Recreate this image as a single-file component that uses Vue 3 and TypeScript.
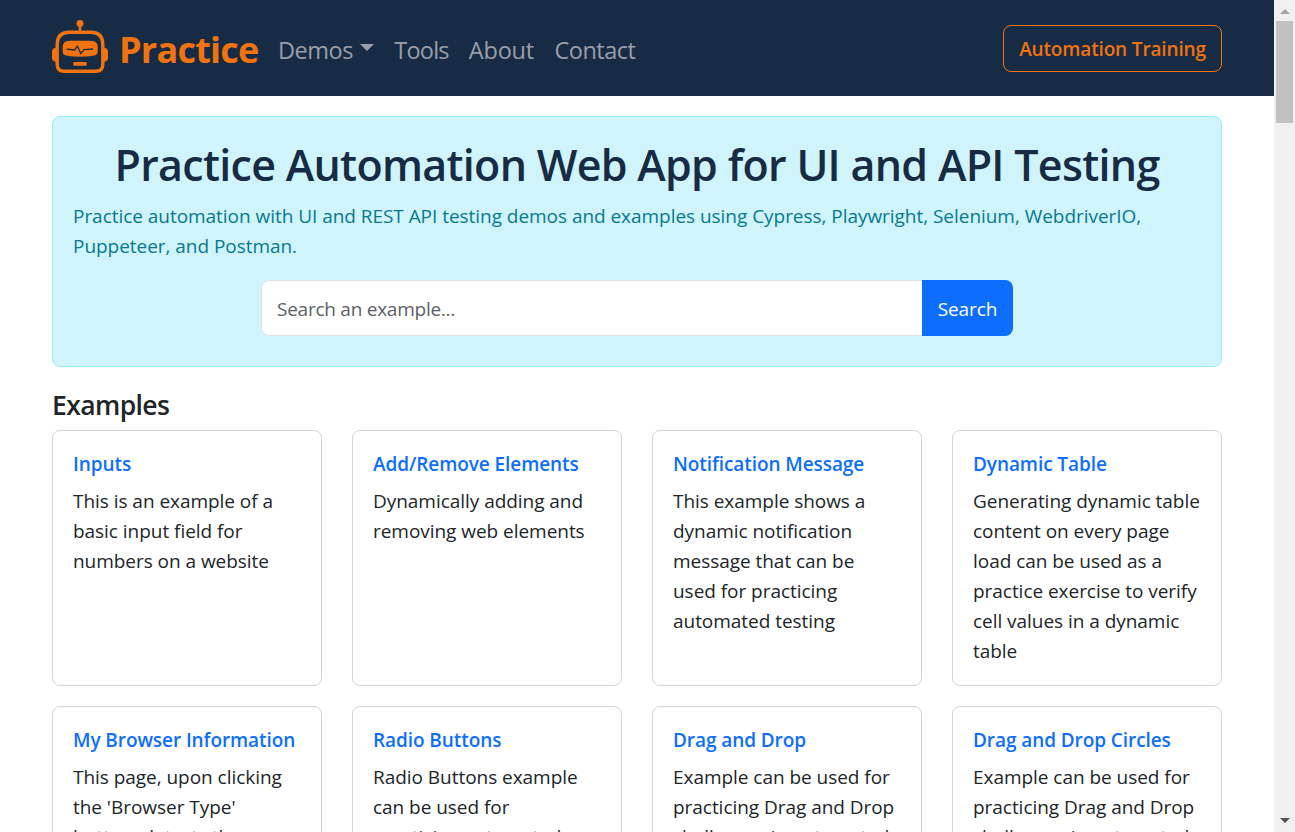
<script setup lang="ts">
interface Example {
  title: string
  lines: string[]
}

const navLinks: string[] = ['Tools', 'About', 'Contact']

const intro: string[] = [
  'Practice automation with UI and REST API testing demos and examples using Cypress, Playwright, Selenium, WebdriverIO,',
  'Puppeteer, and Postman.',
]

const examples: Example[] = [
  { title: 'Inputs', lines: ['This is an example of a', 'basic input field for', 'numbers on a website'] },
  { title: 'Add/Remove Elements', lines: ['Dynamically adding and', 'removing web elements'] },
  {
    title: 'Notification Message',
    lines: ['This example shows a', 'dynamic notification', 'message that can be', 'used for practicing', 'automated testing'],
  },
  {
    title: 'Dynamic Table',
    lines: ['Generating dynamic table', 'content on every page', 'load can be used as a', 'practice exercise to verify', 'cell values in a dynamic', 'table'],
  },
  { title: 'My Browser Information', lines: ['This page, upon clicking', "the 'Browser Type'", 'button, detects the'] },
  { title: 'Radio Buttons', lines: ['Radio Buttons example', 'can be used for', 'practicing automated'] },
  { title: 'Drag and Drop', lines: ['Example can be used for', 'practicing Drag and Drop', 'challenges in automated'] },
  { title: 'Drag and Drop Circles', lines: ['Example can be used for', 'practicing Drag and Drop', 'challenges in automated'] },
]
</script>

<template>
  <div class="window">
    <div class="page">
      <nav class="navbar">
        <a class="brand">
          <svg class="robot" width="56" height="53" viewBox="0 0 56 53" fill="none">
            <circle cx="28" cy="3.4" r="3.5" fill="#f0730f" />
            <path d="M28 5v7" stroke="#f0730f" stroke-width="2.6" />
            <path
              d="M17 12.2H39Q50.8 12.2 50.8 24.5V44.2Q50.8 51.2 43.8 51.2H12.2Q5.2 51.2 5.2 44.2V24.5Q5.2 12.2 17 12.2Z"
              stroke="#f0730f"
              stroke-width="3.4"
            />
            <path d="M4.5 27.5Q0 28 0 31.5V38Q0 41.5 4.5 42ZM51.5 27.5Q56 28 56 31.5V38Q56 41.5 51.5 42Z" fill="#f0730f" />
            <path
              d="M17.5 20.7H39Q45.7 20.7 45.7 27V31.5Q45.7 35.2 41 35.8Q28 37.8 15.4 35.8Q10.7 35.2 10.7 31.5V27Q10.7 20.7 17.5 20.7Z"
              fill="#f0730f"
            />
            <path d="M14.7 29.1L22.6 30L25.4 26.2L28.8 33.6L32 29.6L41 29" stroke="#182b44" stroke-width="1.3" />
            <rect x="21" y="42" width="14" height="3.7" rx="1.8" fill="#f0730f" />
          </svg>
          <span class="brand-name">Practice</span>
        </a>
        <div class="links">
          <a class="link demos">Demos<i class="caret"></i></a>
          <a v-for="l in navLinks" :key="l" class="link">{{ l }}</a>
        </div>
        <button class="training">Automation Training</button>
      </nav>

      <main class="container">
        <section class="hero">
          <h1>Practice Automation Web App for UI and API Testing</h1>
          <p class="intro"><span v-for="l in intro" :key="l">{{ l }}</span></p>
          <div class="search">
            <div class="field">Search an example...</div>
            <button class="go">Search</button>
          </div>
        </section>

        <h2>Examples</h2>
        <div class="grid">
          <article v-for="e in examples" :key="e.title" class="card">
            <h3>{{ e.title }}</h3>
            <p><span v-for="l in e.lines" :key="l">{{ l }}</span></p>
          </article>
        </div>
      </main>
    </div>
    <div class="scrollbar">
      <i class="up"></i>
      <i class="thumb"></i>
      <i class="down"></i>
    </div>
  </div>
</template>

<style>
html,
body {
  margin: 0;
  overflow: hidden;
}
</style>

<style scoped>
* {
  box-sizing: border-box;
}
.window {
  display: flex;
  width: 1295px;
  height: 832px;
  overflow: hidden;
  background: #fff;
  color: #212529;
  font-family: 'Open Sans', 'Noto Sans', sans-serif;
  font-size: 19px;
  line-height: 30px;
  letter-spacing: -0.04px;
}
.page {
  width: 1274px;
  height: 832px;
  overflow: hidden;
}
.navbar {
  display: flex;
  align-items: center;
  height: 96px;
  padding: 0 52px;
  background: #182b44;
}
.brand {
  display: flex;
  align-items: center;
  color: #f0730f;
}
.robot {
  margin-top: -3px;
}
.brand-name {
  width: 140px;
  margin: 3px 0 0 11px;
  font-size: 36px;
  line-height: 48px;
  font-weight: 700;
  letter-spacing: -0.75px;
  white-space: nowrap;
}
.links {
  display: flex;
  gap: 20.5px;
  margin-left: 19px;
  color: #989fa9;
  font-size: 23.5px;
  letter-spacing: -0.5px;
  white-space: nowrap;
  margin-top: 4px;
}
.link:nth-child(2) {
  width: 54px;
  letter-spacing: -0.8px;
}
.link:nth-child(3) {
  letter-spacing: -0.2px;
}
.demos {
  display: flex;
}
.caret {
  margin: 9px 0 0 7px;
  border: 7px solid transparent;
  border-top-color: #989fa9;
  border-bottom: 0;
  height: 0;
}
.training {
  width: 219px;
  height: 47px;
  margin-left: auto;
  padding: 2px 0 0;
  border: 1px solid #f0730f;
  border-radius: 8px;
  background: transparent;
  color: #f0730f;
  font: 600 19px/30px 'Open Sans', sans-serif;
  letter-spacing: -0.15px;
  white-space: nowrap;
}
.container {
  padding: 20px 52px 0;
}
.hero {
  height: 251px;
  padding: 23px 20px 0;
  border: 1px solid #9eeaf9;
  border-radius: 8px;
  background: #cff4fc;
}
h1 {
  margin: 0;
  color: #182b44;
  font-size: 43px;
  font-weight: 600;
  line-height: 50px;
  letter-spacing: -0.7px;
  text-align: center;
  white-space: nowrap;
}
p {
  margin: 0;
  white-space: nowrap;
}
p span {
  display: block;
}
.intro {
  margin-top: 11px;
  color: #087990;
}
.search {
  display: flex;
  width: 752px;
  height: 56px;
  margin: 19px auto 0;
}
.field {
  flex: 1;
  padding: 13px 15px;
  border: 1px solid #dee2e6;
  border-right: 0;
  border-radius: 8px 0 0 8px;
  background: #fff;
  color: #5c6167;
  letter-spacing: -0.25px;
}
.go {
  width: 91px;
  padding: 2px 0 0;
  border: 0;
  border-radius: 0 8px 8px 0;
  background: #0d6efd;
  color: #fff;
  font: 400 19px/30px 'Open Sans', sans-serif;
  letter-spacing: -0.1px;
}
h2 {
  margin: 22px 0 8px;
  font-size: 26.5px;
  font-weight: 600;
  line-height: 33px;
  letter-spacing: -0.6px;
}
.grid {
  display: grid;
  grid-template-columns: repeat(4, 270px);
  grid-auto-rows: 256px;
  gap: 20px 30px;
}
.card {
  padding: 21px 20px 0;
  border: 1px solid #d3d4d5;
  border-radius: 8px;
}
h3 {
  margin: 0 0 10px;
  color: #0d6efd;
  font-size: 19px;
  font-weight: 600;
  line-height: 24px;
  letter-spacing: -0.08px;
  white-space: nowrap;
}
.scrollbar {
  display: flex;
  flex-direction: column;
  align-items: center;
  width: 21px;
  background: #f0f0f0;
}
.up {
  margin-top: 9px;
  border: 5px solid transparent;
  border-bottom-color: #a3a3a3;
  border-top: 0;
}
.thumb {
  width: 17px;
  height: 102px;
  margin-top: 7px;
  background: #c1c1c1;
}
.down {
  margin: auto 0 9px;
  border: 5px solid transparent;
  border-top-color: #505050;
  border-bottom: 0;
}
</style>
